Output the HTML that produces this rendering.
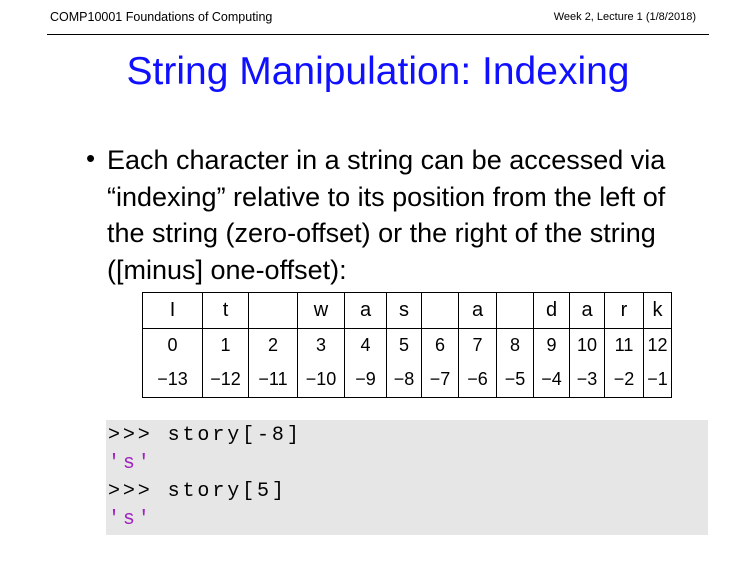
<!DOCTYPE html>
<html><head><style>
body{margin:0;width:756px;height:567px;background:#fff;position:relative;font-family:"Liberation Sans",sans-serif;color:#000;overflow:hidden}
.h{position:absolute;top:11px;font-size:11px}
.rule{position:absolute;left:47px;width:662px;top:34px;border-top:1px solid #000}
.title{position:absolute;top:50px;left:0;width:756px;text-align:center;color:#1010ff;font-size:39px}
.bul{position:absolute;left:86px;top:143px;font-size:26px}
.txt{position:absolute;left:107px;top:142px;font-size:27px;line-height:36.5px;width:640px;white-space:nowrap}
table{position:absolute;left:142px;top:292px;border-collapse:collapse;font-size:18px}
td{border-left:1px solid #000;border-right:1px solid #000;text-align:center;padding:0;height:33px}
tr.a td{border-top:1px solid #000;border-bottom:1px solid #000;height:35px;font-size:20px}
tr.c td{border-bottom:1px solid #000;height:35px}
.code{position:absolute;left:106px;top:420px;width:602px;height:115px;background:#e6e6e6;font-family:"Liberation Mono",monospace;font-size:20px;letter-spacing:2.9px;line-height:28px;padding-top:2px;box-sizing:border-box;padding-left:2px}
.s{color:#a020c0}
</style></head><body>
<div class="h" style="left:50px;font-size:12.5px;top:10px">COMP10001 Foundations of Computing</div>
<div class="h" style="right:60px">Week 2, Lecture 1 (1/8/2018)</div>
<div class="rule"></div>
<div class="title">String Manipulation: Indexing</div>
<div class="bul">•</div>
<div class="txt">Each character in a string can be accessed via<br>“indexing” relative to its position from the left of<br>the string (zero-offset) or the right of the string<br>([minus] one-offset):</div>
<table>
<tr class="a"><td style="width:59px">I</td><td style="width:45px">t</td><td style="width:48px"></td><td style="width:46px">w</td><td style="width:41px">a</td><td style="width:34px">s</td><td style="width:36px"></td><td style="width:37px">a</td><td style="width:36px"></td><td style="width:35px">d</td><td style="width:34px">a</td><td style="width:38px">r</td><td style="width:27px">k</td></tr>
<tr><td>0</td><td>1</td><td>2</td><td>3</td><td>4</td><td>5</td><td>6</td><td>7</td><td>8</td><td>9</td><td>10</td><td>11</td><td>12</td></tr>
<tr class="c"><td>−13</td><td>−12</td><td>−11</td><td>−10</td><td>−9</td><td>−8</td><td>−7</td><td>−6</td><td>−5</td><td>−4</td><td>−3</td><td>−2</td><td>−1</td></tr>
</table>
<div class="code">&gt;&gt;&gt; story[-8]<br><span class="s">'s'</span><br>&gt;&gt;&gt; story[5]<br><span class="s">'s'</span></div>
</body></html>
